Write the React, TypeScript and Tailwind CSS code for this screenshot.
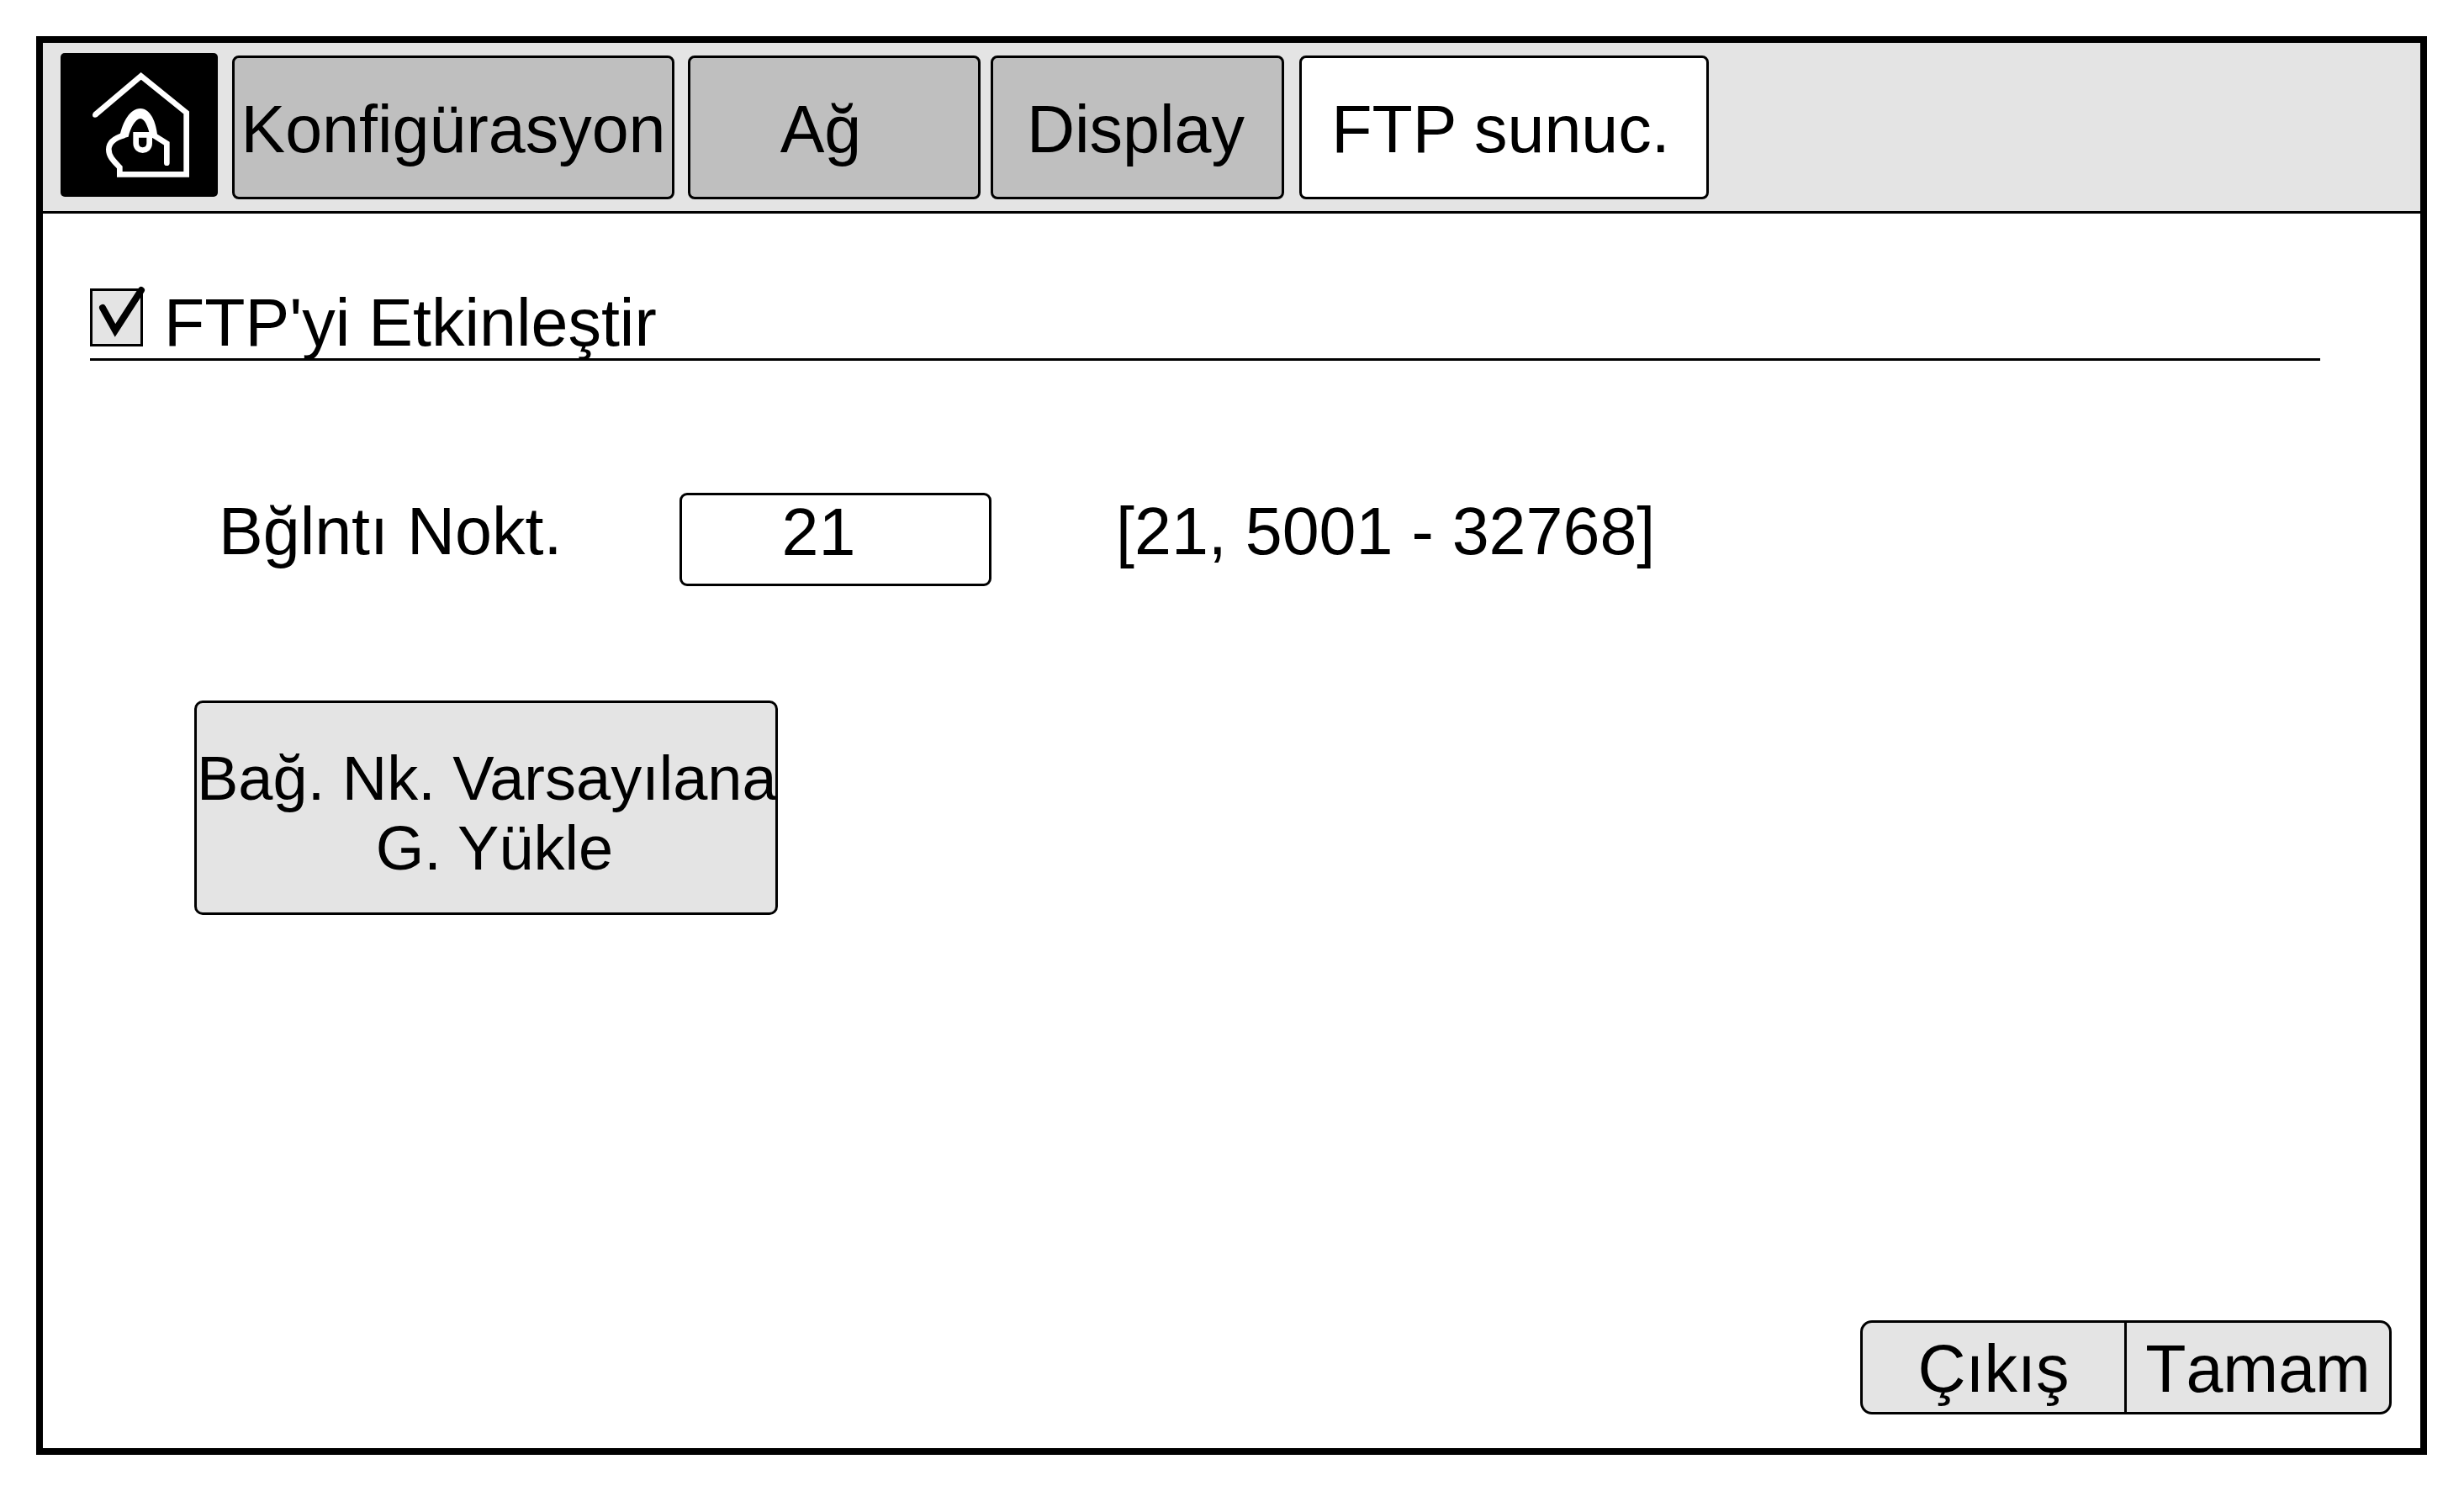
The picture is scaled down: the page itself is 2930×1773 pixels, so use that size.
import React, { useState } from 'react';
import clsx from 'clsx';

type Tab = {
  label: string;
  className: string;
  active?: boolean;
};

const tabs: Tab[] = [
  { label: 'Konfigürasyon', className: 'w-[526px]' },
  { label: 'Ağ', className: 'ml-4 w-[348px] pr-8' },
  { label: 'Display', className: 'ml-3 w-[349px] pr-1' },
  { label: 'FTP sunuc.', className: 'ml-[18px] w-[487px] pr-2', active: true },
];

const HomeIcon: React.FC = () => (
  <svg viewBox="0 0 561 513" className="h-full w-full" fill="none" stroke="white" strokeWidth="20" aria-hidden="true">
    {/* house outline running into the hand */}
    <path
      d="M123 221 L287 82 L449 213 V433 H211 V408 C190 386 172 370 172 344 C172 316 196 302 228 293"
      strokeMiterlimit="10"
    />
    <circle cx="123" cy="221" r="9" fill="white" stroke="none" />
    {/* finger */}
    <path
      d="M212 292 C222 250 245 198 285 198 C322 198 341 250 345 290 L318 290 C312 264 300 234 285 234 C267 234 249 268 242 299 L218 305 Z"
      fill="white"
      stroke="none"
    />
    <path d="M340 292 H269 V322 C269 355 317 355 317 322 V292" />
    <path d="M330 292 L379 323 V392" strokeLinecap="round" />
  </svg>
);

const Header: React.FC = () => (
  <header className="flex items-start border-b-[3px] border-black bg-[#e4e4e4] pt-3 pb-[14px] pl-[21px]">
    <button type="button" aria-label="Home" className="h-[171px] w-[187px] shrink-0 rounded-[5px] bg-black">
      <HomeIcon />
    </button>
    <nav className="mt-[3px] ml-[17px] flex">
      {tabs.map((tab) => (
        <button
          key={tab.label}
          type="button"
          className={clsx(
            'h-[171px] shrink-0 rounded-[8px] border-[3px] border-black pt-1 text-center whitespace-nowrap',
            tab.active ? 'bg-white' : 'bg-[#bfbfbf]',
            tab.className,
          )}
        >
          {tab.label}
        </button>
      ))}
    </nav>
  </header>
);

const App: React.FC = () => {
  const [enabled, setEnabled] = useState(true);
  const [port, setPort] = useState('21');

  return (
    <div className="min-h-screen bg-white py-[43px] pr-11 pl-[43px] font-['Liberation_Sans',Arial,sans-serif] text-[79px] leading-[88px] text-black">
      <div className="flex min-h-[calc(100vh-86px)] flex-col border-8 border-black">
        <Header />

        <main className="flex flex-1 flex-col pt-[84px] pr-[34px] pb-10 pl-14">
          <div className="mr-[85px] flex items-start border-b-[3px] border-black">
            <span className="relative mt-[5px] h-[69px] w-[63px] shrink-0">
              <input
                id="ftp-enabled"
                type="checkbox"
                checked={enabled}
                onChange={(e) => setEnabled(e.target.checked)}
                className="block h-full w-full appearance-none border-[3px] border-black bg-[#e4e4e4]"
              />
              {enabled && (
                <svg
                  viewBox="0 0 63 69"
                  className="pointer-events-none absolute inset-0 h-full w-full overflow-visible"
                  fill="none"
                  stroke="black"
                  strokeWidth="8"
                  strokeLinecap="round"
                  strokeMiterlimit="10"
                >
                  <path d="M15 23 L30 50 L61 2" />
                </svg>
              )}
            </span>
            <label htmlFor="ftp-enabled" className="ml-[25px] h-[88px] pt-0.5 whitespace-nowrap">
              FTP'yi Etkinleştir
            </label>
          </div>

          {/* Port */}
          <div className="mt-[157px] ml-[153px] flex items-start">
            <label htmlFor="ftp-port" className="w-[548px] pt-0.5 whitespace-nowrap">
              Bğlntı Nokt.
            </label>
            <input
              id="ftp-port"
              type="text"
              value={port}
              onChange={(e) => setPort(e.target.value)}
              className="h-[111px] w-[371px] rounded-[9px] border-[3px] border-black bg-white pr-10 pb-[18px] text-center"
            />
            <span className="ml-[148px] pt-0.5 whitespace-nowrap">[21, 5001 - 32768]</span>
          </div>

          <button
            type="button"
            className="mt-[136px] ml-[124px] h-[255px] w-[694px] rounded-[10px] border-[3px] border-black bg-[#e4e4e4] pt-3 text-[74px] leading-[83px] whitespace-nowrap"
          >
            Bağ. Nk. Varsayılana
            <br />
            <span className="pl-5">G. Yükle</span>
          </button>

          <div className="mt-auto flex self-end overflow-hidden rounded-[14px] border-[3px] border-black bg-[#e4e4e4]">
            <button type="button" className="h-[106px] w-[311px] pt-1">
              Çıkış
            </button>
            <button type="button" className="h-[106px] w-[315px] border-l-[3px] border-black pt-1 [font-kerning:none]">
              Tamam
            </button>
          </div>
        </main>
      </div>
    </div>
  );
};

export default App;
